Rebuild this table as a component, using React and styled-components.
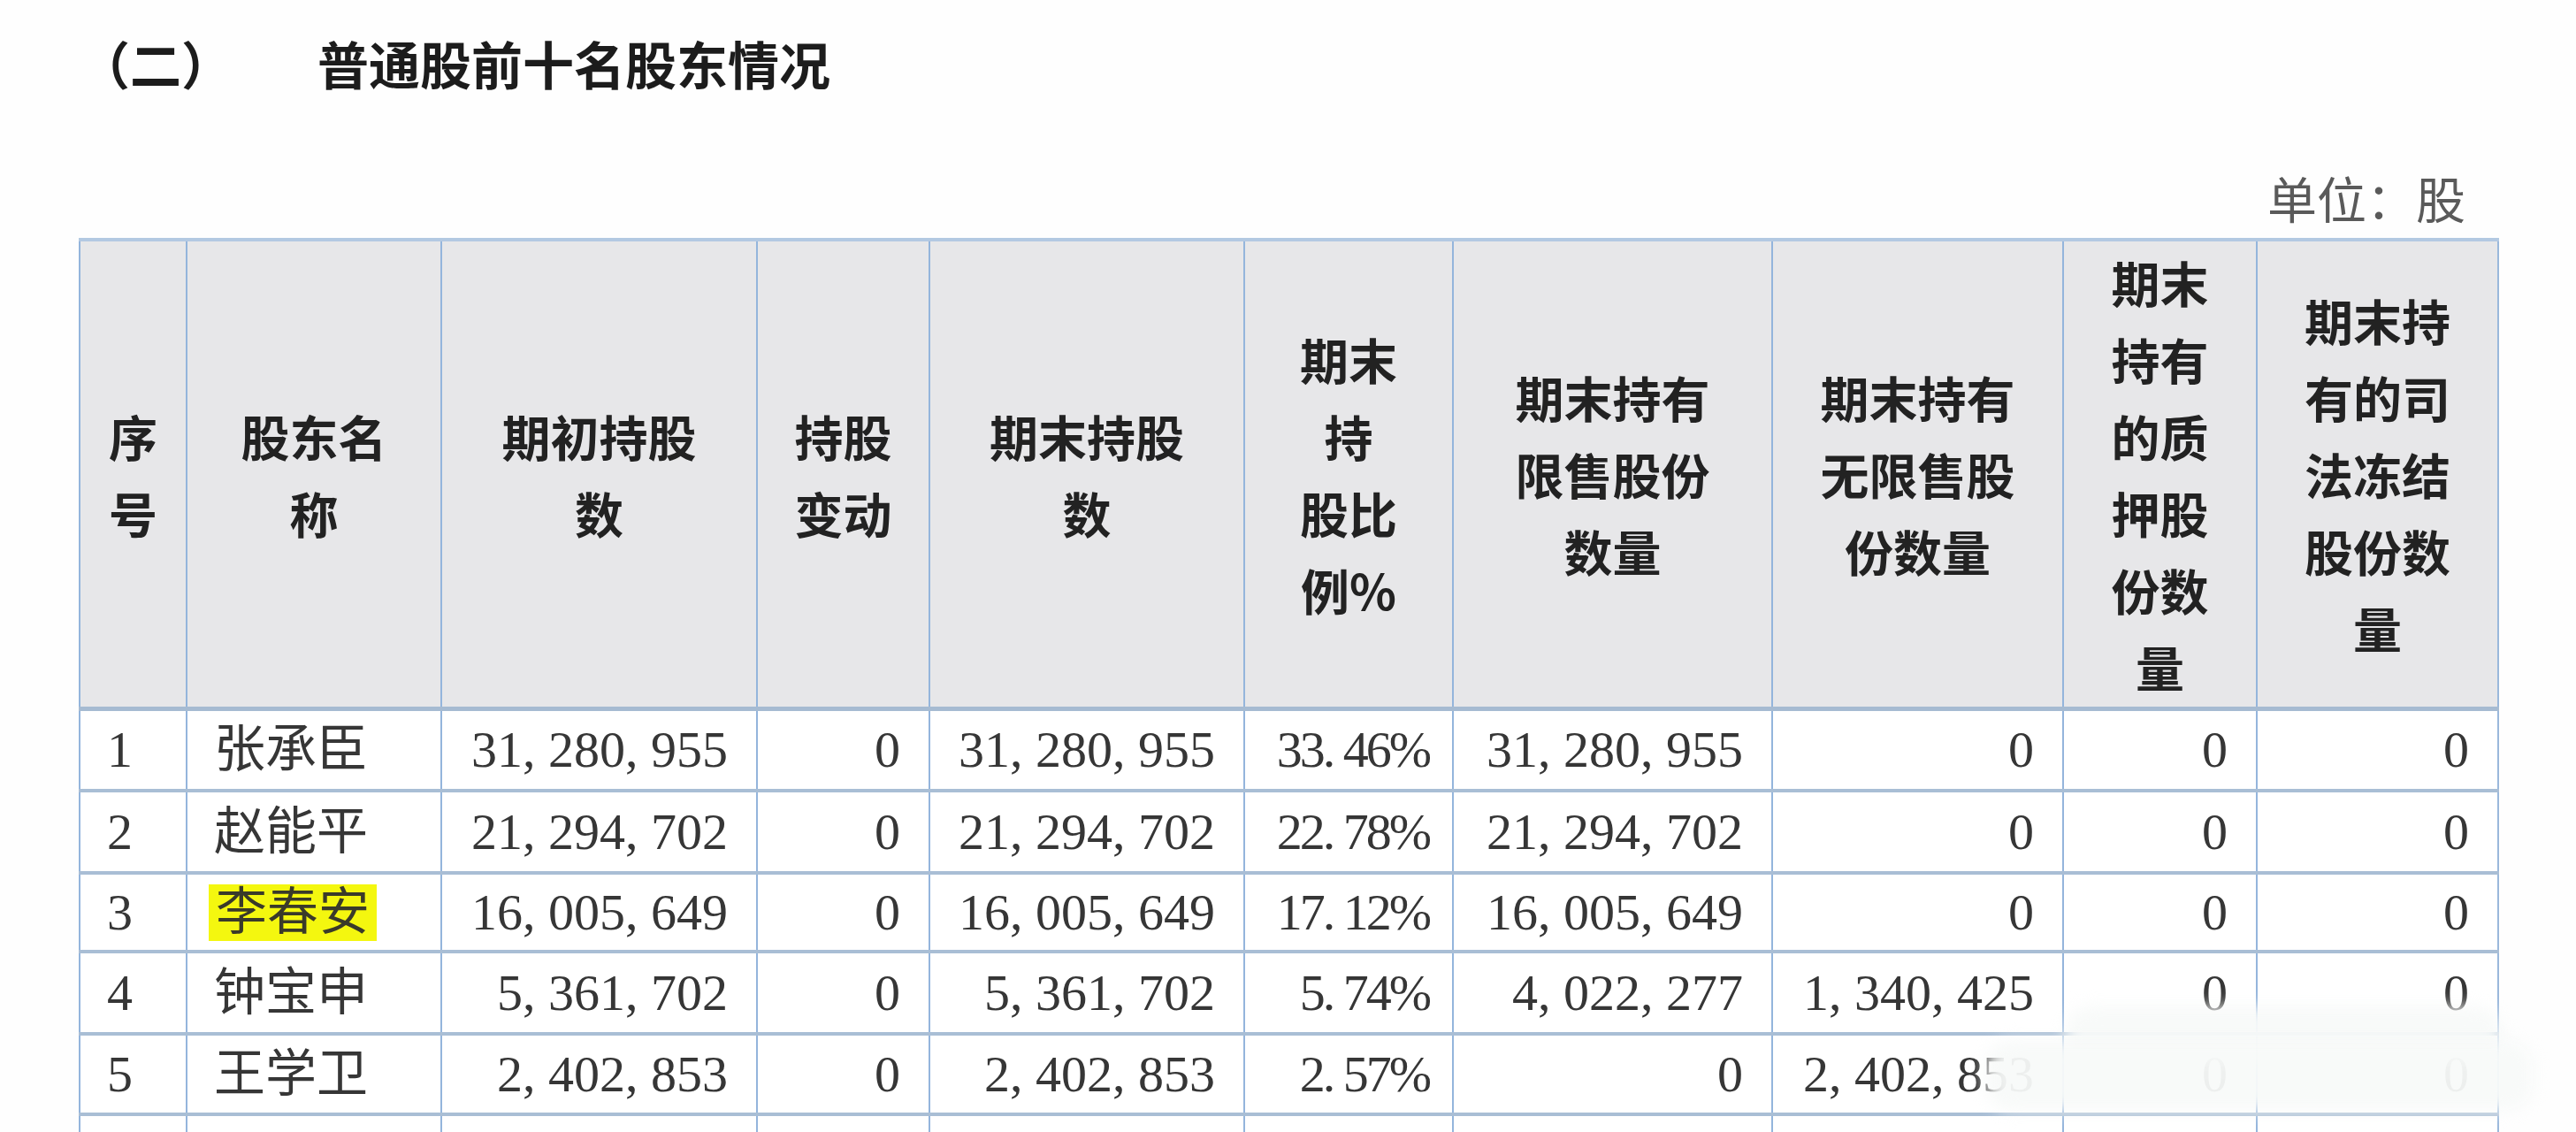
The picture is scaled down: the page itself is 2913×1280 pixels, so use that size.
import React from 'react';
import styled, { createGlobalStyle } from 'styled-components';

const GlobalStyle = createGlobalStyle`
  html, body {
    margin: 0;
    padding: 0;
    background: #ffffff;
  }
  body {
    font-family: "Noto Sans CJK SC", "Noto Sans", sans-serif;
  }
`;

const Page = styled.div`
  position: relative;
  width: 2913px;
  height: 1280px;
  overflow: hidden;
  box-sizing: border-box;
  padding: 31px 0 0 89px;
  background: #fefefe;
`;

const TitleRow = styled.div`
  display: flex;
  align-items: center;
  height: 80px;
  font-family: "Noto Sans CJK SC", sans-serif;
  font-size: 58px;
  font-weight: 700;
  color: #1c1c1c;
`;

const SectionNo = styled.span`
  margin-right: 96px;
`;

const UnitLine = styled.div`
  width: 2735px;
  box-sizing: border-box;
  margin-top: 77px;
  padding-right: 36px;
  text-align: right;
  font-family: "Noto Sans CJK SC", sans-serif;
  font-size: 56px;
  line-height: 70px;
  color: #5a5a5a;
`;

const Table = styled.table`
  margin-top: 11px;
  width: 2735px;
  table-layout: fixed;
  border-collapse: collapse;
  border-top: 4px solid #b3c9e2;
  border-left: 2px solid #9ab8dc;
  border-right: 2px solid #9ab8dc;
`;

const HeadRow = styled.tr`
  height: 530px;
  background: #e7e7e9;
`;

const HeadCell = styled.th`
  padding: 0 8px;
  border-left: 2px solid #94b5dc;
  border-bottom: 5px solid #a6bbd2;
  vertical-align: middle;
  text-align: center;
  font-family: "Noto Sans CJK SC", sans-serif;
  font-weight: 700;
  font-size: 55px;
  line-height: 87px;
  color: #222222;
  white-space: nowrap;
`;

const BodyRow = styled.tr`
  height: ${p => p.h}px;
  background: #ffffff;
`;

const BodyCell = styled.td`
  padding: 0 ${p => (p.align === 'left' ? '10px' : p.tight ? '26px' : '32px')} 0
    ${p => (p.align === 'left' ? '30px' : '6px')};
  border-left: 2px solid #94b5dc;
  border-bottom: 4px solid #a9bed5;
  text-align: ${p => p.align};
  vertical-align: middle;
  font-family: "Liberation Serif", "Noto Sans CJK SC", serif;
  font-size: 58px;
  line-height: 60px;
  letter-spacing: ${p => (p.tight ? '-3px' : '0')};
  color: #363636;
  white-space: nowrap;
  overflow: hidden;
`;

const Highlight = styled.span`
  display: inline-block;
  margin-left: -6px;
  padding: 2px 8px;
  background: #f4f70f;
  color: #3a3a2a;
`;

const Smudge = styled.div`
  position: absolute;
  left: ${p => p.x}px;
  top: ${p => p.y}px;
  width: ${p => p.w}px;
  height: ${p => p.h}px;
  background: rgba(248, 250, 249, 0.95);
  filter: blur(9px);
  border-radius: 30px;
`;

const widths = [121, 288, 357, 195, 356, 236, 361, 329, 219, 273];

const headers = [
  ['序', '号'],
  ['股东名', '称'],
  ['期初持股', '数'],
  ['持股', '变动'],
  ['期末持股', '数'],
  ['期末', '持', '股比', '例%'],
  ['期末持有', '限售股份', '数量'],
  ['期末持有', '无限售股', '份数量'],
  ['期末', '持有', '的质', '押股', '份数', '量'],
  ['期末持', '有的司', '法冻结', '股份数', '量'],
];

const rows = [
  ['1', '张承臣', '31, 280, 955', '0', '31, 280, 955', '33. 46%', '31, 280, 955', '0', '0', '0'],
  ['2', '赵能平', '21, 294, 702', '0', '21, 294, 702', '22. 78%', '21, 294, 702', '0', '0', '0'],
  ['3', '李春安', '16, 005, 649', '0', '16, 005, 649', '17. 12%', '16, 005, 649', '0', '0', '0'],
  ['4', '钟宝申', '5, 361, 702', '0', '5, 361, 702', '5. 74%', '4, 022, 277', '1, 340, 425', '0', '0'],
  ['5', '王学卫', '2, 402, 853', '0', '2, 402, 853', '2. 57%', '0', '2, 402, 853', '0', '0'],
  ['', '', '', '', '', '', '', '', '', ''],
];

const rowHeights = [93, 93, 89, 93, 91, 92];

const App = () => (
  <Page>
    <GlobalStyle />
    <TitleRow>
      <SectionNo>（二）</SectionNo>
      <span>普通股前十名股东情况</span>
    </TitleRow>
    <UnitLine>单位：股</UnitLine>
    <Table>
      <colgroup>
        {widths.map((w, i) => (
          <col key={i} style={{ width: w }} />
        ))}
      </colgroup>
      <thead>
        <HeadRow>
          {headers.map((lines, i) => (
            <HeadCell key={i}>
              {lines.map((l, j) => (
                <div key={j}>{l}</div>
              ))}
            </HeadCell>
          ))}
        </HeadRow>
      </thead>
      <tbody>
        {rows.map((r, i) => (
          <BodyRow key={i} h={rowHeights[i]}>
            {r.map((v, j) => (
              <BodyCell key={j} align={j < 2 ? 'left' : 'right'} tight={j === 5}>
                {i === 2 && j === 1 ? <Highlight>{v}</Highlight> : v}
              </BodyCell>
            ))}
          </BodyRow>
        ))}
      </tbody>
    </Table>
    <Smudge x={2335} y={1138} w={495} h={62} />
    <Smudge x={2245} y={1176} w={620} h={80} />
  </Page>
);

export default App;
